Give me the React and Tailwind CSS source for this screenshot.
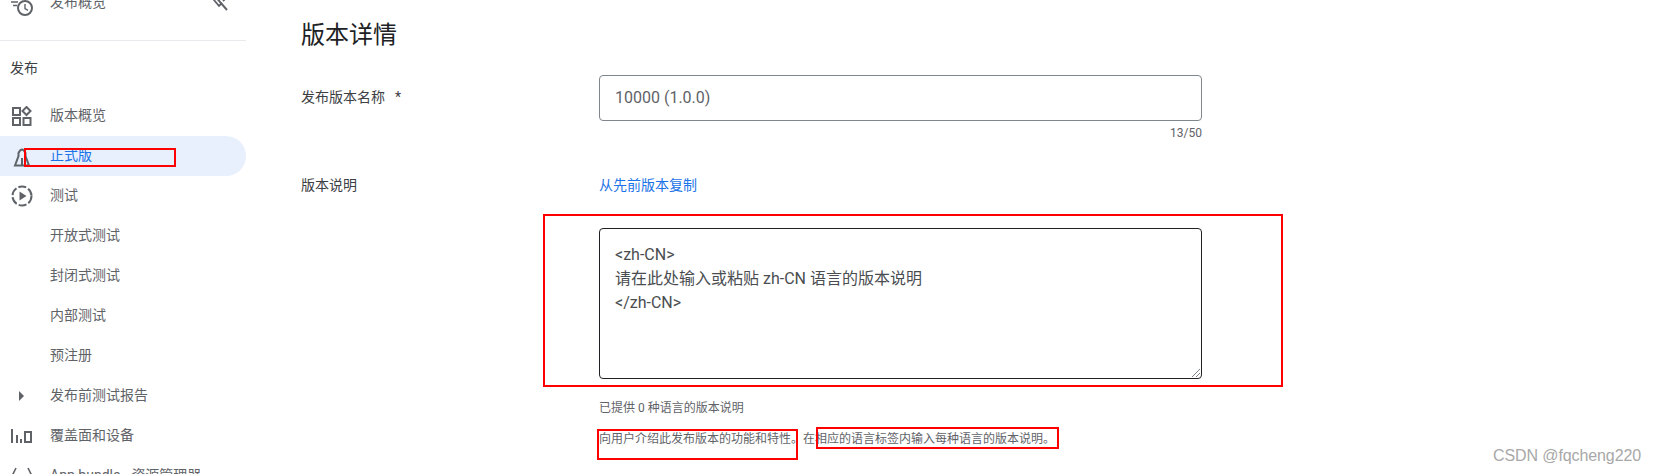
const FONT = 'font-["Roboto","Noto_Sans_CJK_SC",sans-serif]';

const IconHistory = () => (
  <svg width="24" height="40" viewBox="0 0 24 40" fill="none" stroke="#5f6368" strokeWidth="2">
    <path d="M1 19h7M3 22.5h4" strokeWidth="1.6" />
    <circle cx="15" cy="25" r="7" />
    <path d="M15 21v4.5l3 1.8" strokeWidth="1.4" />
  </svg>
);
const IconOff = () => (
  <svg width="16" height="40" viewBox="0 0 16 40" fill="none" stroke="#5f6368" strokeWidth="2">
    <path d="M2 12l13 15" />
    <path d="M4 15l4-4 5 5-2 2M4 15l-2 2 5 6 3-3" strokeWidth="1.8" />
  </svg>
);
const IconDash = () => (
  <svg width="20" height="20" viewBox="0 0 20 20" fill="none" stroke="#5f6368" strokeWidth="2">
    <rect x="1" y="2" width="7" height="7" />
    <path d="M14.5 1l4 4-4 4-4-4z" />
    <rect x="1" y="12" width="7" height="7" />
    <rect x="11.5" y="12" width="7" height="7" />
  </svg>
);
const IconProd = () => (
  <svg width="18" height="20" viewBox="0 0 18 20" fill="none" stroke="#5f6368" strokeWidth="2" className="mt-[2px]">
    <path d="M2 18.5 L5.5 9 V6 Q9 -1 12.5 6 V9 L16 18.5 Z" />
    <path d="M9 11v8" />
  </svg>
);
const IconTest = () => (
  <svg width="24" height="24" viewBox="0 0 24 24" fill="none" stroke="#5f6368" strokeWidth="2">
    <circle cx="12" cy="12" r="9.5" strokeDasharray="8 2.2" />
    <path d="M9.5 7.5l7 4.5-7 4.5z" fill="#5f6368" stroke="none" />
  </svg>
);
const IconCoverage = () => (
  <svg width="24" height="16" viewBox="0 0 24 16" fill="#5f6368">
    <rect x="1" y="1" width="2" height="14" />
    <rect x="6" y="7" width="2" height="8" />
    <rect x="10" y="11" width="2" height="4" />
    <path d="M14 3h8v12h-8zM16 5v8h4V5z" fillRule="evenodd" />
  </svg>
);
const IconBundle = () => (
  <svg width="24" height="24" viewBox="0 0 24 24" fill="none" stroke="#5f6368" strokeWidth="1.6">
    <path d="M6 4L2 12l4 8M18 4l4 8-4 8" />
    <circle cx="12" cy="12" r="1.4" fill="#5f6368" stroke="none" />
  </svg>
);

function NavRow({ icon, label, active, tail }) {
  return (
    <div className={`flex h-10 shrink-0 items-center rounded-r-[20px] ${active ? "bg-[#e8f0fe] text-[#1a73e8]" : "text-[#5f6368]"}`}>
      <span className="flex w-[50px] shrink-0 items-center justify-center pr-[6px]">{icon}</span>
      <span className="flex-1 pb-[2px] text-[14px] whitespace-nowrap">{label}</span>
      {tail && <span className="mr-[18px] flex">{tail}</span>}
    </div>
  );
}

export default function App() {
  return (
    <div className={`relative flex h-[474px] w-[1654px] overflow-hidden bg-white ${FONT}`}>
      <aside className="-mt-[17px] flex w-[246px] shrink-0 flex-col">
        <NavRow icon={<IconHistory />} label="发布概览" tail={<IconOff />} />
        <div className="mt-[17px] h-px shrink-0 bg-[#e8eaed]" />
        <div className="flex h-[55px] shrink-0 items-center pl-[10px] text-[14px] text-[#3c4043]">发布</div>
        <NavRow icon={<IconDash />} label="版本概览" />
        <NavRow icon={<IconProd />} label="正式版" active />
        <NavRow icon={<IconTest />} label="测试" />
        <NavRow label="开放式测试" />
        <NavRow label="封闭式测试" />
        <NavRow label="内部测试" />
        <NavRow label="预注册" />
        <NavRow icon={<span className="ml-[-1px] block h-0 w-0 border-y-[5px] border-l-[5px] border-y-transparent border-l-[#5f6368]" />} label="发布前测试报告" />
        <NavRow icon={<IconCoverage />} label="覆盖面和设备" />
        <NavRow icon={<IconBundle />} label={<>App bundle<span className="ml-[11px]">资源管理器</span></>} />
      </aside>

      <main className="ml-[55px] flex-1">
        <h1 className="mt-[19px] text-[24px] leading-[32px] font-normal text-[#202124]">版本详情</h1>

        <div className="mt-[24px] flex">
          <div className="flex w-[298px] shrink-0 gap-[10px] pt-[12px] text-[14px] leading-[20px] text-[#3c4043]">
            <span>发布版本名称</span><span>*</span>
          </div>
          <div className="w-[603px]">
            <div className="flex h-[46px] items-center rounded-[4px] border border-[#80868b] px-[15px] text-[16px] text-[#5f6368]">10000 (1.0.0)</div>
            <div className="mt-[4px] text-right text-[12px] leading-[16px] text-[#5f6368]">13/50</div>
          </div>
        </div>

        <div className="mt-[34px] flex">
          <div className="w-[298px] shrink-0 text-[14px] leading-[20px] text-[#3c4043]">版本说明</div>
          <div className="w-[603px]">
            <div className="text-[14px] leading-[20px] text-[#1a73e8]">从先前版本复制</div>
            <div className="relative mt-[33px] h-[151px] rounded-[4px] border border-[#202124] px-[15px] pt-[14px] text-[16px] leading-[24px] text-[#4a4d50]">
              <div>&lt;zh-CN&gt;</div>
              <div>请在此处输入或粘贴 zh-CN 语言的版本说明</div>
              <div>&lt;/zh-CN&gt;</div>
              <svg className="absolute right-[1px] bottom-[1px]" width="9" height="9" viewBox="0 0 9 9" stroke="#5f6368" strokeWidth="0.8">
                <path d="M1 9l8-8M5 9l4-4" />
              </svg>
            </div>
            <div className="mt-[21px] text-[12px] leading-[16px] text-[#5f6368]">已提供 0 种语言的版本说明</div>
            <div className="mt-[15px] text-[12px] leading-[16px] whitespace-nowrap text-[#5f6368]">向用户介绍此发布版本的功能和特性。在相应的语言标签内输入每种语言的版本说明。</div>
          </div>
        </div>
      </main>

      {/* annotations drawn over the screenshot */}
      <div className="absolute top-[148px] left-[24px] h-[19px] w-[152px] border-2 border-[#ff0000]" />
      <div className="absolute top-[214px] left-[543px] h-[173px] w-[740px] border-2 border-[#ff0000]" />
      <div className="absolute top-[429px] left-[597px] h-[31px] w-[201px] border-2 border-[#ff0000]" />
      <div className="absolute top-[427px] left-[816px] h-[22px] w-[243px] border-2 border-[#ff0000]" />
      <div className='absolute top-[446px] left-[1493px] font-["Liberation_Sans",sans-serif] text-[16px] leading-[20px] tracking-[-0.1px] text-[#a8a8a8]'>CSDN @fqcheng220</div>
    </div>
  );
}
